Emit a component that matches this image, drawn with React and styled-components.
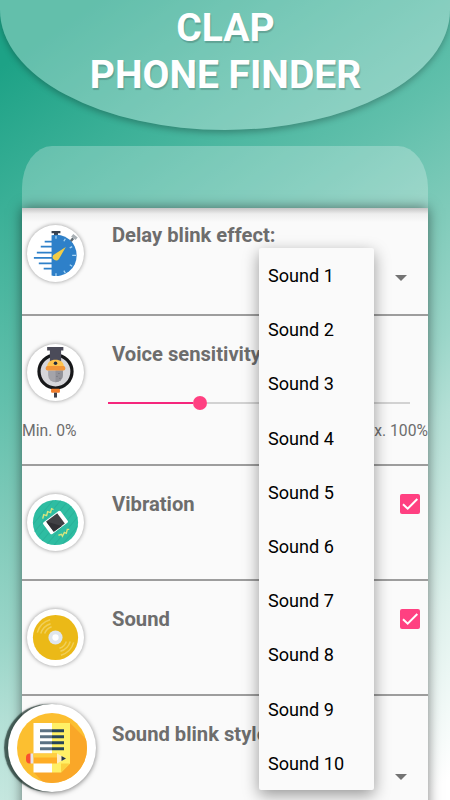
import React from 'react';
import styled, { createGlobalStyle } from 'styled-components';

const sounds = Array.from({ length: 10 }, (_, i) => `Sound ${i + 1}`);

function StopwatchIcon() {
  return (
    <svg width="58" height="58" viewBox="0 0 58 58">
      <path d="M44.500 16.500l2.500-3" stroke="#5d6870" strokeWidth="2.500" />
      <path d="M46 10.500l4.500 3.500" stroke="#a9b0b5" strokeWidth="3.500" />
      <path d="M25 6h9v2.500h-2.500V11h-4V8.500H25z" fill="#38424f" />
      <path d="M25 10.500A21 21 0 1 1 25 51.500z" fill="#2e80c9" />
      <path d="M18 17h8M14 22h12M10 28h16M7 33.500h19M12 39h14M17 44.500h9" stroke="#2e80c9" strokeWidth="1.800" />
      <path d="M29.500 11v3M39 14l-1.500 2.500M46 22l-2.500 1.300M50 31h-4M46 42l-2.500-1.500M39 49l-1.500-2.500M29.500 52v-3" stroke="#a9d5f4" strokeWidth="1.300" />
      <path d="M26.800 30.500L39.500 22.500 32.500 34.500a3.400 3.400 0 1 1-5.700-4z" fill="#f2cc45" />
    </svg>
  );
}

function SensorIcon() {
  return (
    <svg width="58" height="58" viewBox="0 0 58 58">
      <circle cx="29" cy="28" r="16.800" fill="#d6d6da" stroke="#17181a" strokeWidth="3.300" />
      <path d="M20.500 3h16.500v3.500h-2.300V18H23.300V6.500h-2.800z" fill="#4b4b59" />
      <path d="M21.500 27h15v4.500a7.500 7.500 0 0 1-15 0z" fill="#a4a4aa" />
      <path d="M29 27h7.500v4.500a7.500 7.500 0 0 1-7.500 7.500z" fill="#929299" />
      <path d="M20.500 23.500c0-5.500 3.500-7.500 8.500-7.500s8.500 2 8.500 7.500z" fill="#ffc34d" />
      <rect x="19" y="22.500" width="20" height="4.500" rx="2" fill="#f29538" />
      <circle cx="29" cy="19.500" r="1.800" fill="#202b3d" />
      <path d="M32 30h1M30 33h1M33 35h1" stroke="#6d6d74" />
      <rect x="24.500" y="45.500" width="9" height="4" rx="1" fill="#f27d2b" />
      <path d="M29 49.500v5" stroke="#41434d" strokeWidth="3" />
    </svg>
  );
}

function VibrationIcon() {
  return (
    <svg width="58" height="58" viewBox="0 0 58 58">
      <defs>
        <pattern id="stripes" width="6" height="6" patternUnits="userSpaceOnUse" patternTransform="rotate(40)">
          <path d="M0 0v6" stroke="#27ad95" strokeWidth="1.500" />
        </pattern>
      </defs>
      <circle cx="29" cy="29" r="23" fill="#2ebda2" />
      <circle cx="29" cy="29" r="23" fill="url(#stripes)" />
      <g transform="rotate(53.500 29 29)">
        <rect x="21.500" y="18" width="15" height="22" rx="1.500" fill="#fff" />
        <rect x="22.500" y="22" width="13" height="14" fill="#414145" />
        <path d="M22.500 36l13-10v10z" fill="#303034" />
      </g>
      <path d="M16 25l1-4 3 1 1-4 3 1 1-4 2 1M32 42l3-1 1 2 2-4 2 1 1-4 2 0" fill="none" stroke="#d9e57d" strokeWidth="1.400" />
    </svg>
  );
}

function DiscIcon() {
  return (
    <svg width="58" height="58" viewBox="0 0 58 58">
      <circle cx="29" cy="29" r="23" fill="#ebb917" />
      <path d="M10.500 24a19 19 0 0 1 13-13M14 25a15 15 0 0 1 10-10M18 25a11 11 0 0 1 7-7M47.500 34a19 19 0 0 1-13 13M44 33a15 15 0 0 1-10 10M40 33a11 11 0 0 1-7 7" fill="none" stroke="#f1cf58" strokeWidth="1.500" />
      <circle cx="29" cy="29" r="7.200" fill="#dfe6ed" />
      <circle cx="29" cy="29" r="3.200" fill="#fff" />
    </svg>
  );
}

function NotesIcon() {
  return (
    <svg width="88" height="88" viewBox="0 0 88 88">
      <defs>
        <clipPath id="noteDisc"><circle cx="44" cy="44" r="35" /></clipPath>
      </defs>
      <circle cx="44" cy="44" r="35" fill="#fcbf30" />
      <g clipPath="url(#noteDisc)">
        <path d="M62 19l30 30v40H45L25.500 68z" fill="#faa728" />
      </g>
      <path d="M25.500 19H44v49.500H25.500z" fill="#fff" />
      <path d="M44 19h18v40.500l-9 9h-9z" fill="#fff066" />
      <path d="M53 68.500v-9h9z" fill="#fbd13f" />
      <path d="M32 26.700h12M32 32.700h12M32 38.700h12M32 44.700h12" stroke="#5b7184" strokeWidth="3" />
      <path d="M44 26.700h12M44 32.700h12M44 38.700h12M44 44.700h12" stroke="#264459" strokeWidth="3" />
      <path d="M23 49.500v10h-1a4 4 0 0 1-4-4v-2a4 4 0 0 1 4-4z" fill="#f9502f" />
      <path d="M22.500 49.500h3v10h-3z" fill="#e4e6ec" />
      <path d="M25.500 49.500H49v10H25.500z" fill="#ffad25" />
      <path d="M25.500 49.500H49v4H25.500z" fill="#ffcf42" />
      <path d="M49 49.500l9 5-9 5z" fill="#ffedc4" />
      <path d="M53.500 52l4.500 2.500-4.500 2.500z" fill="#243746" />
    </svg>
  );
}

function Checkbox() {
  return (
    <CheckBox>
      <svg width="20" height="20" viewBox="0 0 20 20">
        <path d="M3 10.200l4.700 4.500L17.300 5" fill="none" stroke="#fff" strokeWidth="2" />
      </svg>
    </CheckBox>
  );
}

function App() {
  return (
    <Page>
      <GlobalStyle />
      <Header>
        <Title>CLAP<br />PHONE FINDER</Title>
      </Header>
      <Phone>
        <Screen>
          <Row $height={108}>
            <IconBadge $top={17}><StopwatchIcon /></IconBadge>
            <Content $top={15}>
              <Label>Delay blink effect:</Label>
              <Arrow />
            </Content>
          </Row>
          <Row $height={149.500} $wrap>
            <IconBadge $top={28}><SensorIcon /></IconBadge>
            <Content $top={26}>
              <Label>Voice sensitivity:</Label>
              <Slider>
                <SliderFill />
                <SliderThumb />
                <SliderRest />
              </Slider>
            </Content>
            <Range>
              <span>Min. 0%</span>
              <span>Max. 100%</span>
            </Range>
          </Row>
          <Row $height={115}>
            <IconBadge $top={28}><VibrationIcon /></IconBadge>
            <Content $top={26}>
              <OptionLine><Label>Vibration</Label><Checkbox /></OptionLine>
            </Content>
          </Row>
          <Row $height={115}>
            <IconBadge $top={28}><DiscIcon /></IconBadge>
            <Content $top={26}>
              <OptionLine><Label>Sound</Label><Checkbox /></OptionLine>
            </Content>
          </Row>
          <Row $height={115}>
            <IconSpace />
            <Content $top={26}>
              <Label>Sound blink style:</Label>
              <Arrow />
            </Content>
          </Row>
        </Screen>
      </Phone>
      <Menu>
        {sounds.map((sound) => (
          <MenuItem key={sound}>{sound}</MenuItem>
        ))}
      </Menu>
      <NotesBadge><NotesIcon /></NotesBadge>
    </Page>
  );
}

const GlobalStyle = createGlobalStyle`
  * {
    box-sizing: border-box;
  }

  body {
    margin: 0;
    font-family: Roboto, sans-serif;
  }
`;

const Page = styled.div`
  position: relative;
  display: flex;
  flex-direction: column;
  align-items: center;
  width: 450px;
  height: 800px;
  overflow: hidden;
  background: linear-gradient(
    145deg,
    #1da286 6%,
    #3bb097 19%,
    #62c0ac 36%,
    #80cbba 47%,
    #9bd6c9 58%,
    #b4e0d6 65%,
    #def1ec 82%,
    #fff 98%
  );
`;

const Header = styled.header`
  flex: none;
  width: 450px;
  height: 130px;
  padding-top: 5px;
  border-radius: 0 0 50% 50% / 0 0 120px 120px;
  background: rgba(255, 255, 255, 0.31);
  box-shadow: 0 3px 6px rgba(0, 0, 0, 0.25);
  text-align: center;
`;

const Title = styled.h1`
  margin: 0 0 0 1px;
  color: #fff;
  font-size: 39px;
  font-weight: 700;
  line-height: 47px;
  text-shadow: 1px 2px 1px rgba(0, 0, 0, 0.18);
`;

const Phone = styled.main`
  flex: none;
  width: 406px;
  height: 700px;
  margin-top: 16px;
  padding-top: 62px;
  border-radius: 30px 30px 0 0 / 42px 42px 0 0;
  background: rgba(255, 255, 255, 0.25);
`;

const Screen = styled.div`
  height: 638px;
  background: linear-gradient(#c4c4c4, #eee 6px, #fafafa 14px);
  box-shadow: 0 0 12px rgba(0, 0, 0, 0.5);
`;

const Row = styled.section`
  display: flex;
  flex-wrap: ${(props) => (props.$wrap ? 'wrap' : 'nowrap')};
  align-items: flex-start;
  align-content: flex-start;
  height: ${(props) => props.$height}px;
  border-bottom: 2px solid #9d9d9d;
`;

const IconBadge = styled.div`
  flex: none;
  width: 57px;
  height: 57px;
  margin: ${(props) => props.$top}px 29px 0 5px;
  border-radius: 50%;
  background: #fff;
  box-shadow: 0 0 4px rgba(0, 0, 0, 0.4);

  svg {
    display: block;
    width: 57px;
    height: 57px;
  }
`;

const IconSpace = styled.div`
  flex: none;
  width: 91px;
`;

const Content = styled.div`
  display: flex;
  flex: 1;
  flex-direction: column;
  padding: ${(props) => props.$top}px 8px 0 0;
`;

const Label = styled.h2`
  margin: 0 0 0 -1px;
  color: #6d6d6d;
  font-size: 20.200px;
  font-weight: 700;
  line-height: 24px;
  white-space: nowrap;
`;

const Arrow = styled.span`
  align-self: flex-end;
  margin: 28px 13px 0 0;
  border-top: 6px solid #737373;
  border-right: 6px solid transparent;
  border-left: 6px solid transparent;
`;

const OptionLine = styled.div`
  display: flex;
  align-items: center;
  justify-content: space-between;
`;

const CheckBox = styled.span`
  width: 20px;
  height: 20px;
  border-radius: 2px;
  background: #ff4081;

  svg {
    display: block;
  }
`;

const Slider = styled.div`
  display: flex;
  align-items: center;
  height: 14px;
  margin: 30px 10px 0 -5px;
`;

const SliderFill = styled.span`
  width: 85px;
  height: 2px;
  background: #f5267c;
`;

const SliderThumb = styled.span`
  width: 14px;
  height: 14px;
  border-radius: 50%;
  background: #ff4081;
`;

const SliderRest = styled.span`
  flex: 1;
  height: 2px;
  background: #d2d2d2;
`;

const Range = styled.div`
  display: flex;
  flex: 0 0 100%;
  justify-content: space-between;
  margin-top: 11px;
  color: #6d6d6d;
  font-size: 15.700px;
  line-height: 20px;
`;

const Menu = styled.ul`
  position: absolute;
  top: 248px;
  left: 259px;
  width: 115px;
  margin: 0;
  padding: 0;
  border-radius: 2px;
  background: #fafafa;
  box-shadow: 0 5px 16px rgba(0, 0, 0, 0.4);
  list-style: none;
`;

const MenuItem = styled.li`
  display: flex;
  align-items: center;
  height: 54.200px;
  padding: 1px 0 0 9px;
  color: #000;
  font-size: 18.100px;
`;

const NotesBadge = styled.div`
  position: absolute;
  top: 703.500px;
  left: 8px;
  width: 88px;
  height: 88px;
  border-radius: 50%;
  background: #fff;
  box-shadow: -4px 0 1px rgba(35, 55, 50, 0.75), 0 1px 5px rgba(0, 0, 0, 0.5);
`;

export default App;
